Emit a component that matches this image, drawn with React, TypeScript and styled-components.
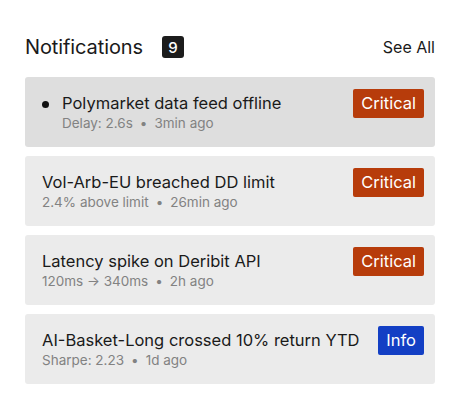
import React from "react";
import styled, { createGlobalStyle } from "styled-components";

const GlobalStyle = createGlobalStyle`
  body {
    margin: 0;
    background: #fff;
    font-family: Inter, "Noto Sans", sans-serif;
    color: #1a1a1a;
  }
`;

const Panel = styled.div`
  width: 410px;
  padding: 34px 26px 0 25px;
`;

const Header = styled.div`
  display: flex;
  align-items: center;
  height: 26px;
  margin-bottom: 17px;
`;

const Title = styled.h2`
  margin: 0;
  font-size: 20px;
  font-weight: 400;
  letter-spacing: -0.1px;
`;

const Count = styled.span`
  display: inline-flex;
  align-items: center;
  justify-content: center;
  width: 22px;
  height: 22px;
  margin-left: 19px;
  border-radius: 3px;
  background: #1c1c1c;
  color: #fff;
  font-size: 15px;
  font-weight: 500;
`;

const SeeAll = styled.a`
  margin-left: auto;
  font-size: 16px;
  font-weight: 400;
  color: #1a1a1a;
  cursor: pointer;
`;

const List = styled.div`
  display: flex;
  flex-direction: column;
  gap: 9px;
`;

const Card = styled.div<{ $unread?: boolean }>`
  display: flex;
  align-items: center;
  height: 70px;
  box-sizing: border-box;
  padding: 0 11px 0 17px;
  border-radius: 3px;
  background: ${(p) => (p.$unread ? "#dedede" : "#ebebeb")};
`;

const Dot = styled.span`
  align-self: flex-start;
  width: 7px;
  height: 7px;
  margin: 24px 13px 0 0;
  border-radius: 50%;
  background: #111;
  flex-shrink: 0;
`;

const Body = styled.div`
  display: flex;
  flex-direction: column;
  gap: 1px;
  margin-top: 0;
`;

const ItemTitle = styled.div`
  font-size: 16.5px;
  line-height: 20px;
  font-weight: 400;
`;

const Meta = styled.div`
  font-size: 13.5px;
  line-height: 18px;
  color: #828282;
`;

const Sep = styled.span`
  margin: 0 7px;
`;

const Level = styled.span<{ $kind: "critical" | "info" }>`
  display: inline-flex;
  align-items: center;
  height: 29px;
  padding: 0 8px;
  margin-left: auto;
  margin-top: -18px;
  border-radius: 2px;
  background: ${(p) => (p.$kind === "critical" ? "#b73c0b" : "#133fc4")};
  color: #fff;
  font-size: 16.5px;
  font-weight: 400;
`;

const items = [
  { title: "Polymarket data feed offline", meta: "Delay: 2.6s", time: "3min ago", level: "critical" as const, unread: true },
  { title: "Vol-Arb-EU breached DD limit", meta: "2.4% above limit", time: "26min ago", level: "critical" as const },
  { title: "Latency spike on Deribit API", meta: "120ms → 340ms", time: "2h ago", level: "critical" as const },
  { title: "AI-Basket-Long crossed 10% return YTD", meta: "Sharpe: 2.23", time: "1d ago", level: "info" as const },
];

export default function App() {
  return (
    <>
      <GlobalStyle />
      <Panel>
        <Header>
          <Title>Notifications</Title>
          <Count>9</Count>
          <SeeAll>See All</SeeAll>
        </Header>
        <List>
          {items.map((it) => (
            <Card key={it.title} $unread={it.unread}>
              {it.unread && <Dot />}
              <Body>
                <ItemTitle>{it.title}</ItemTitle>
                <Meta>
                  {it.meta}
                  <Sep>•</Sep>
                  {it.time}
                </Meta>
              </Body>
              <Level $kind={it.level}>{it.level === "critical" ? "Critical" : "Info"}</Level>
            </Card>
          ))}
        </List>
      </Panel>
    </>
  );
}
